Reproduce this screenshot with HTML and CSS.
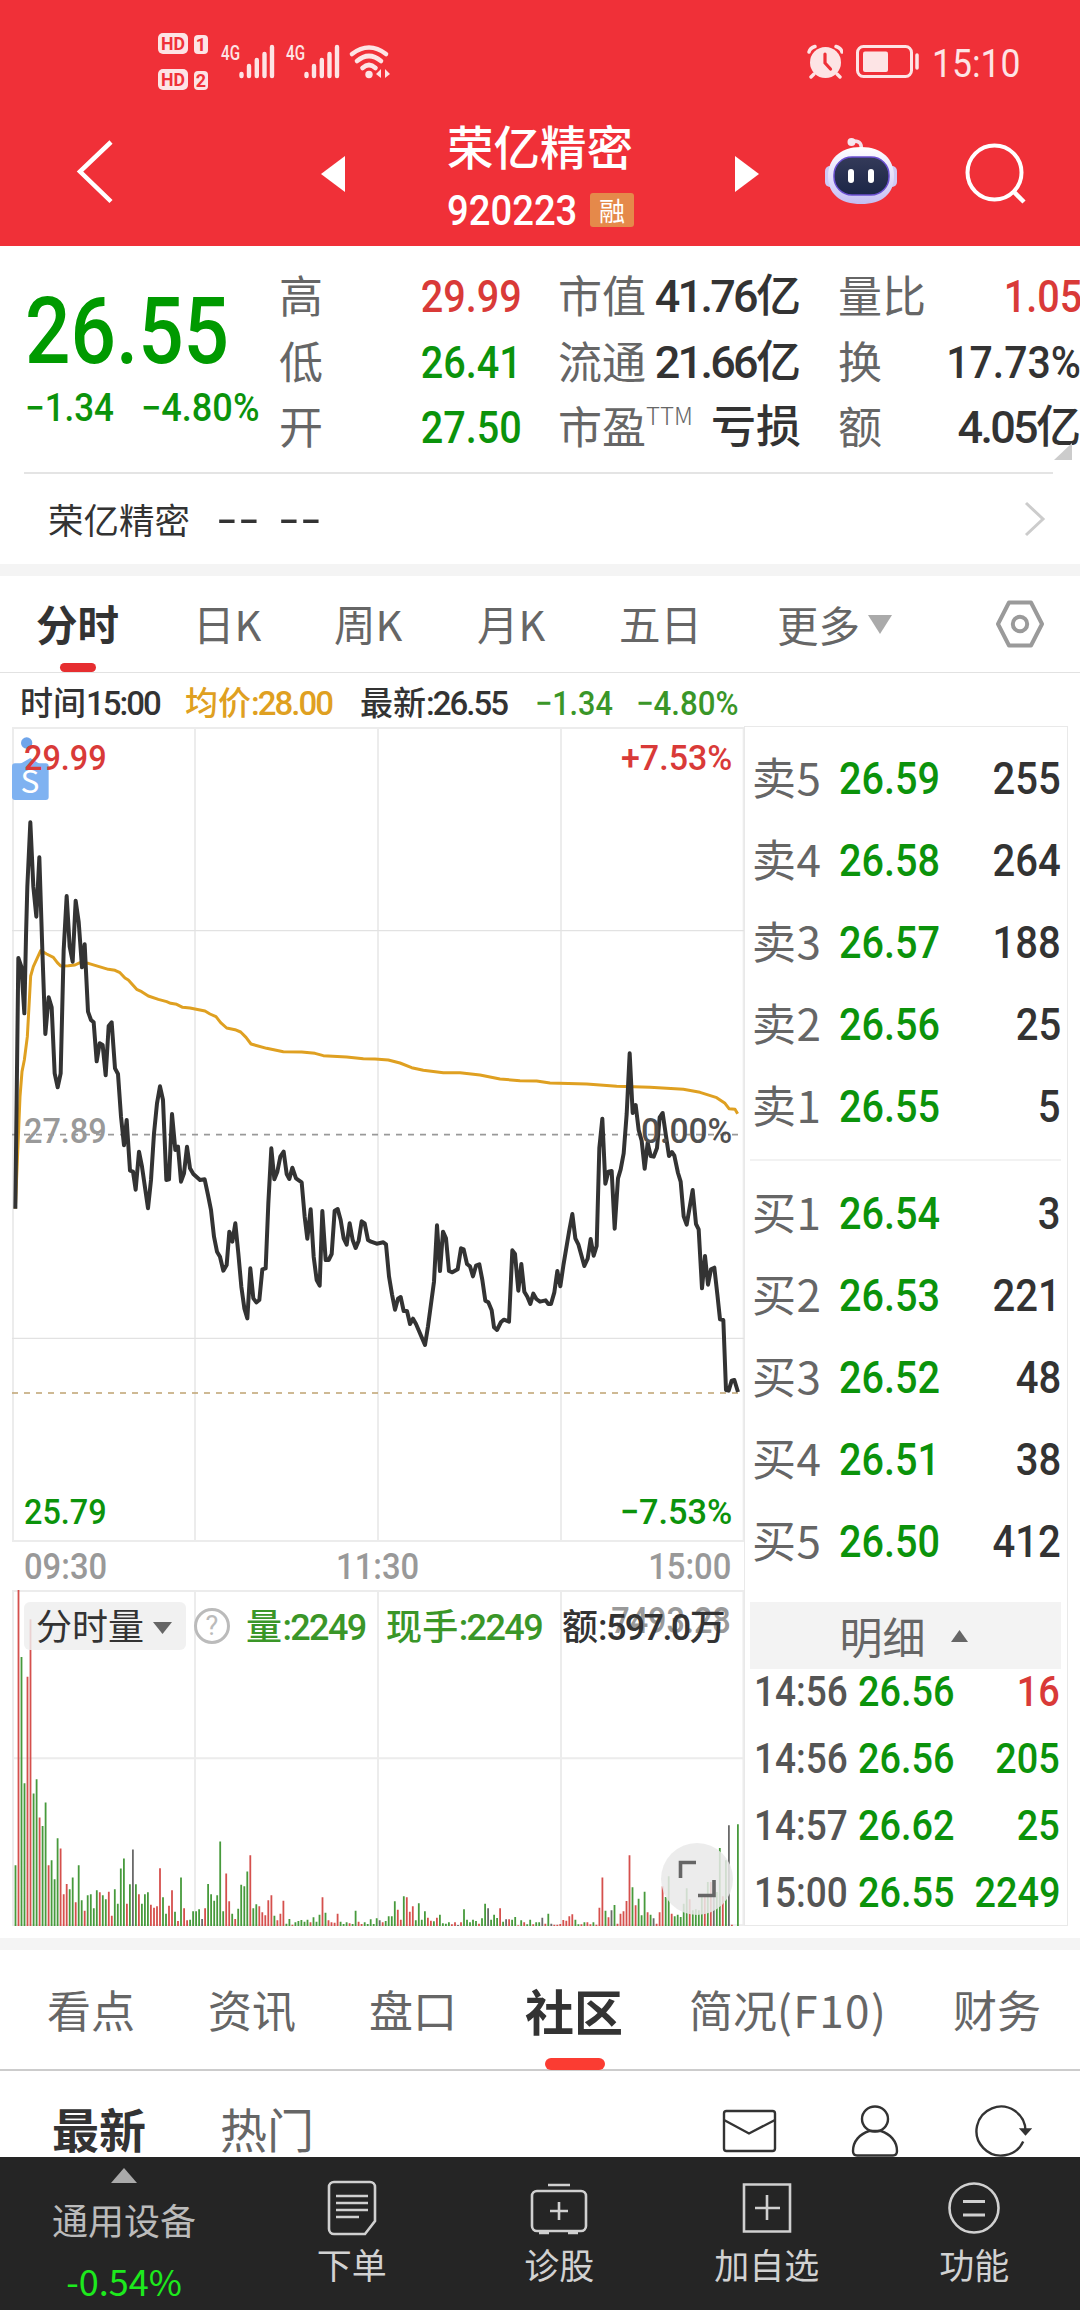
FILE: index.html
```html
<!DOCTYPE html>
<html lang="zh-CN">
<head>
<meta charset="utf-8">
<title>荣亿精密 920223</title>
<link rel="stylesheet" href="styles.css">
</head>
<body>
<div class="app">
  <header class="top">
    <div class="status">
      <svg class="status-left" width="240" height="66" viewBox="156 28 240 66">
        <g fill="#fde4e5">
          <rect x="158" y="33" width="30" height="21" rx="5"/><rect x="194" y="35" width="14" height="19" rx="4"/>
          <rect x="158" y="69" width="30" height="21" rx="5"/><rect x="194" y="71" width="14" height="19" rx="4"/>
        </g>
        <g class="hd">
          <text x="173" y="50" textLength="24" lengthAdjust="spacingAndGlyphs">HD</text><text x="201" y="51">1</text>
          <text x="173" y="86" textLength="24" lengthAdjust="spacingAndGlyphs">HD</text><text x="201" y="87">2</text>
        </g>
        <g class="net">
          <text x="221" y="60" textLength="19" lengthAdjust="spacingAndGlyphs">4G</text>
          <text x="286" y="60" textLength="19" lengthAdjust="spacingAndGlyphs">4G</text>
        </g>
        <g stroke="#fde4e5" stroke-width="4.4" stroke-linecap="round" fill="none">
          <path d="M241.500 74v2M249 66v10M256.800 60v16M264.500 54v22M272 47v29"/>
          <path d="M306.500 74v2M314 66v10M321.800 60v16M329.500 54v22M337 47v29"/>
          <path d="M352 54q17-13 34 0M357 61q12-10 24 0M362.500 68q6.500-6 13 0" stroke-width="4.600"/>
        </g>
        <circle cx="369" cy="74.500" r="3.700" fill="#fde4e5"/>
        <path d="M381 69v9l-5-4zM385 78v-9l5 5z" fill="#fde4e5"/>
      </svg>
      <div class="status-right">
        <svg width="36" height="36" viewBox="805 44 36 36">
          <circle cx="823.500" cy="62.500" r="15.500" fill="#fde4e5"/>
          <path d="M807 52q1-4 6-5.500M840 52q-1-4-6-5.500M812 74l-3 3M835 74l3 3" stroke="#fde4e5" stroke-width="3.400" fill="none" stroke-linecap="round"/>
          <path d="M823 54v9l5.500 6" stroke="#ef3038" stroke-width="3.200" fill="none" stroke-linecap="round"/>
        </svg>
        <svg width="64" height="36" viewBox="853 44 64 36">
          <rect x="855.500" y="46.500" width="54" height="30" rx="6" fill="none" stroke="#fde4e5" stroke-width="3"/>
          <rect x="861" y="51.500" width="25" height="20.500" rx="2" fill="#fde4e5"/>
          <path d="M915 55v13" stroke="#fde4e5" stroke-width="3.500" stroke-linecap="round"/>
        </svg>
        <span class="clock">15:10</span>
      </div>
    </div>
    <nav class="titlebar">
      <svg class="back" width="42" height="70" viewBox="74 136 42 70"><path d="M111 142L80 171.500l31 30" fill="none" stroke="#fff" stroke-width="4.500"/></svg>
      <svg class="prev" width="24" height="36" viewBox="0 0 24 36"><path d="M24 0v36L0 18z" fill="#fff"/></svg>
      <div class="title">
        <h1>荣亿精密</h1>
        <div class="code"><span class="num">920223</span><span class="badge">融</span></div>
      </div>
      <svg class="next" width="24" height="36" viewBox="0 0 24 36"><path d="M0 0v36l24-18z" fill="#fff"/></svg>
      <svg class="robot" width="74" height="70" viewBox="824 136 74 70">
        <defs>
          <linearGradient id="shell" x1="0" y1="0" x2="0" y2="1"><stop offset="0" stop-color="#fff"/><stop offset=".55" stop-color="#e2ddfb"/><stop offset="1" stop-color="#c3bdf2"/></linearGradient>
          <linearGradient id="visor" x1="0" y1="0" x2="0" y2="1"><stop offset="0" stop-color="#343a59"/><stop offset="1" stop-color="#1b2647"/></linearGradient>
        </defs>
        <path d="M861 151q2-10-7-10" fill="none" stroke="#f3dfe8" stroke-width="3.500"/>
        <circle cx="851.500" cy="142" r="4" fill="#f6e6ee"/>
        <rect x="825" y="166" width="10" height="21" rx="5" fill="#cfc9f5"/><rect x="887" y="166" width="10" height="21" rx="5" fill="#cfc9f5"/>
        <path d="M861 147c22 0 33 13 33 29 0 18-12 28-33 28s-33-10-33-28c0-16 11-29 33-29z" fill="url(#shell)"/>
        <rect x="834" y="157" width="55" height="38" rx="18" fill="url(#visor)" stroke="#6a4fd0" stroke-width="1.500"/>
        <rect x="848" y="169" width="6" height="14" rx="3" fill="#fff"/><rect x="868" y="169" width="6" height="14" rx="3" fill="#fff"/>
      </svg>
      <svg class="search" width="64" height="64" viewBox="964 142 64 64"><circle cx="994.500" cy="172.500" r="27" fill="none" stroke="#fff" stroke-width="4"/><path d="M1013 191l11 11" stroke="#fff" stroke-width="4.500"/></svg>
    </nav>
  </header>

  <section class="quote">
    <div class="price">
      <div class="last num">26.55</div>
      <div class="change num"><span>−1.34</span><span class="pct">−4.80%</span></div>
    </div>
    <dl class="stats">
      <div><dt>高</dt><dd class="up slim">29.99</dd></div>
      <div><dt>市值</dt><dd><span class="tight">41.76</span>亿</dd></div>
      <div><dt>量比</dt><dd class="up slim">1.05</dd></div>
      <div><dt>低</dt><dd class="down slim">26.41</dd></div>
      <div><dt>流通</dt><dd><span class="tight">21.66</span>亿</dd></div>
      <div><dt>换</dt><dd class="slim wide">17.73%</dd></div>
      <div><dt>开</dt><dd class="down slim">27.50</dd></div>
      <div><dt>市盈<sup>TTM</sup></dt><dd>亏损</dd></div>
      <div><dt>额</dt><dd><span class="tight">4.05</span>亿</dd></div>
    </dl>
    <svg class="corner" width="18" height="17" viewBox="0 0 18 17"><path d="M18 0v17H0z" fill="#ccc"/></svg>
  </section>

  <div class="related">
    <span class="rel-name">荣亿精密</span><span class="dash">--</span><span class="dash">--</span>
    <svg width="22" height="36" viewBox="0 0 22 36"><path d="M2 2l17 16L2 34" fill="none" stroke="#ccc" stroke-width="3"/></svg>
  </div>

  <nav class="periods">
    <span class="p1 on">分时</span><span class="p2">日K</span><span class="p3">周K</span><span class="p4">月K</span><span class="p5">五日</span>
    <span class="p6">更多<svg width="24" height="19" viewBox="0 0 24 19"><path d="M0 0h24L12 19z" fill="#aaa"/></svg></span>
    <svg class="gear" width="50" height="48" viewBox="0 0 50 48"><path d="M14 2.500h22L47 24 36 45.500H14L3 24z" fill="none" stroke="#9a9a9a" stroke-width="4" stroke-linejoin="round"/><circle cx="25" cy="24" r="7.200" fill="none" stroke="#9a9a9a" stroke-width="4"/></svg>
  </nav>

  <main class="board">
    <div class="charts">
      <div class="info num">
        <span class="i1">时间<span class="tight">15:00</span></span><span class="i2 avg">均价<span class="tight">:28.00</span></span><span class="i3">最新<span class="tight">:26.55</span></span><span class="i4 dn">−1.34</span><span class="i5 dn">−4.80%</span>
      </div>
      <svg class="minute" width="733" height="816" viewBox="36 21 2199 2448">
        <g class="grid">
          <path d="M39 21V2466M585 21V2466M1134 21V2466M1683 21V2466M2231 21V2466M36 24H2235M36 2463H2235"/>
          <path class="thin" d="M36 632H2232M36 1855H2232"/>
        </g>
        <path class="dash-base" d="M36 1244H2214"/>
        <path class="dash-last" d="M36 2019H2214"/>
        <circle cx="80" cy="69" r="17" fill="#6fa5ea"/>
        <path d="M60 132l31-18 28 18z" fill="#7db1f0"/>
        <rect x="36" y="130" width="110" height="110" rx="9" fill="#7fb2f1"/>
        <text class="flag" x="90" y="220">S</text>
        <polyline class="avg-line" points="46,1466 55,1250 60,1130 66,1055 73,1020 82,950 92,768 100,740 122,692 140,702 160,712 172,728 182,738 205,737 225,735 240,728 265,730 325,748 345,751 360,758 375,774 385,780 410,808 425,815 445,828 475,838 500,845 512,850 530,853 548,862 570,864 615,873 630,882 648,890 662,908 680,924 705,929 722,936 738,952 753,972 800,985 850,995 905,996 945,1000 970,1007 1040,1011 1090,1016 1125,1017 1165,1020 1200,1029 1235,1043 1270,1051 1330,1058 1380,1058 1440,1065 1500,1077 1560,1082 1610,1083 1650,1089 1760,1092 1850,1099 1950,1102 2000,1105 2050,1108 2100,1117 2150,1133 2175,1150 2187,1166 2205,1168 2213,1181"/>
        <polyline class="price-line" points="46,1466 55,714 64,740 73,880 78,650 82,500 91,307 100,500 109,590 118,412 127,690 136,942 146,832 155,862 164,1060 173,1102 182,1060 191,690 200,528 209,680 218,725 227,542 236,605 246,742 254,673 264,875 273,900 281,907 290,1024 299,970 308,975 317,1066 326,918 335,907 345,1045 354,1062 363,1190 372,1276 380,1200 390,1352 399,1355 407,1409 417,1295 426,1340 444,1465 453,1380 462,1240 471,1150 480,1099 489,1140 499,1380 507,1378 516,1182 526,1290 534,1280 543,1385 552,1360 561,1280 570,1345 580,1362 600,1380 614,1378 624,1425 633,1470 642,1550 651,1595 660,1610 670,1652 680,1635 688,1535 697,1565 706,1510 715,1600 724,1700 733,1765 742,1795 751,1645 760,1735 769,1747 778,1740 787,1648 797,1645 805,1450 814,1285 823,1378 832,1355 841,1310 851,1295 860,1362 868,1377 877,1343 888,1375 905,1387 914,1490 922,1556 932,1468 941,1610 950,1680 959,1697 967,1473 977,1620 986,1620 995,1602 1004,1472 1013,1467 1022,1500 1031,1555 1040,1574 1049,1510 1058,1560 1067,1584 1076,1562 1085,1504 1094,1510 1104,1560 1113,1565 1130,1571 1150,1567 1158,1573 1167,1669 1176,1723 1185,1769 1194,1736 1202,1731 1211,1773 1221,1773 1230,1812 1239,1796 1248,1812 1275,1875 1284,1819 1302,1685 1311,1516 1320,1653 1329,1535 1338,1555 1347,1653 1357,1657 1373,1648 1383,1585 1391,1588 1401,1632 1410,1639 1419,1669 1428,1637 1438,1633 1447,1680 1456,1742 1465,1747 1475,1771 1482,1822 1491,1830 1503,1806 1512,1799 1527,1805 1537,1591 1545,1602 1555,1712 1564,1632 1573,1715 1582,1730 1591,1752 1600,1721 1609,1737 1620,1745 1637,1741 1645,1752 1653,1752 1663,1717 1672,1653 1681,1699 1690,1637 1708,1530 1717,1482 1726,1555 1735,1573 1753,1638 1763,1616 1772,1557 1781,1607 1790,1578 1798,1284 1807,1196 1816,1391 1825,1355 1835,1353 1844,1526 1854,1375 1862,1348 1871,1300 1880,1182 1889,1000 1898,1179 1907,1155 1916,1230 1925,1262 1934,1346 1943,1268 1952,1308 1961,1310 1971,1284 1979,1192 1988,1179 1997,1241 2007,1308 2016,1296 2023,1307 2034,1359 2042,1385 2051,1489 2060,1514 2078,1410 2088,1512 2096,1528 2106,1705 2115,1608 2124,1694 2133,1648 2143,1643 2152,1723 2160,1798 2170,1800 2178,2010 2186,2012 2195,1982 2203,1980 2214,2016"/>
        <g class="axis">
          <text x="72" y="149" class="fill-up" textLength="248" lengthAdjust="spacingAndGlyphs">29.99</text>
          <text x="2197" y="149" class="fill-up end" textLength="334" lengthAdjust="spacingAndGlyphs">+7.53%</text>
          <text x="72" y="1269" class="fill-mid" textLength="248" lengthAdjust="spacingAndGlyphs">27.89</text>
          <text x="2197" y="1269" class="fill-dark end" textLength="274" lengthAdjust="spacingAndGlyphs">0.00%</text>
          <text x="72" y="2411" class="fill-down" textLength="248" lengthAdjust="spacingAndGlyphs">25.79</text>
          <text x="2197" y="2411" class="fill-down end" textLength="338" lengthAdjust="spacingAndGlyphs">−7.53%</text>
        </g>
      </svg>
      <div class="times num"><span>09:30</span><span>11:30</span><span>15:00</span></div>
      <div class="volume">
        <svg class="vol-chart" width="733" height="336" viewBox="12 30 733 1007" preserveAspectRatio="none">
          <path class="vgrid" d="M13 30V1037M195 30V1037M378 30V1037M561 30V1037M743.500 30V1037"/>
          <path class="hgrid" d="M12 33H745M12 534H745M12 1035H745"/>
          <path id="vol-up" class="bars" stroke="#d5504d"/><path id="vol-down" class="bars" stroke="#479a3c"/><path id="vol-flat" class="bars" stroke="#6a6a6a"/>
        </svg>
        <div class="vol-head num">
          <span class="picker">分时量<svg width="19" height="12" viewBox="0 0 19 12"><path d="M0 0h19L9.500 12z" fill="#666"/></svg></span>
          <span class="help">?</span>
          <span class="v1 dn">量<span class="tight">:2249</span></span><span class="v2 dn">现手<span class="tight">:2249</span></span><span class="v3">额<span class="tight">:597.0</span>万</span>
        </div>
        <span class="vol-max num">7493.28</span>
        <svg class="expand" width="72" height="72" viewBox="0 0 72 72"><circle cx="36" cy="36" r="36" fill="#e9e9e9" fill-opacity=".85"/><path d="M35 19.500H19.500V35M37 52.500h16V37" fill="none" stroke="#666" stroke-width="3.600"/></svg>
      </div>
    </div>

    <aside class="book">
      <div class="levels sell">
        <div><b>卖5</b><i>26.59</i><em>255</em></div>
        <div><b>卖4</b><i>26.58</i><em>264</em></div>
        <div><b>卖3</b><i>26.57</i><em>188</em></div>
        <div><b>卖2</b><i>26.56</i><em>25</em></div>
        <div><b>卖1</b><i>26.55</i><em>5</em></div>
      </div>
      <div class="levels buy">
        <div><b>买1</b><i>26.54</i><em>3</em></div>
        <div><b>买2</b><i>26.53</i><em>221</em></div>
        <div><b>买3</b><i>26.52</i><em>48</em></div>
        <div><b>买4</b><i>26.51</i><em>38</em></div>
        <div><b>买5</b><i>26.50</i><em>412</em></div>
      </div>
      <div class="detail-head">明细<svg width="17" height="12" viewBox="0 0 17 12"><path d="M0 12h17L8.500 0z" fill="#666"/></svg></div>
      <div class="ticks num">
        <div><b>14:56</b><i>26.56</i><em class="up">16</em></div>
        <div><b>14:56</b><i>26.56</i><em>205</em></div>
        <div><b>14:57</b><i>26.62</i><em>25</em></div>
        <div><b>15:00</b><i>26.55</i><em>2249</em></div>
      </div>
    </aside>
  </main>

  <nav class="sections">
    <span class="s1">看点</span><span class="s2">资讯</span><span class="s3">盘口</span><span class="s4 on">社区</span><span class="s5">简况<span class="code-tag">(F10)</span></span><span class="s6">财务</span>
  </nav>

  <div class="feed">
    <span class="f1">最新</span><span class="f2">热门</span>
    <svg width="310" height="54" viewBox="722 2104 310 54" fill="none" stroke="#333" stroke-width="2.400">
      <rect x="724" y="2111" width="51" height="40" rx="2.500"/><path d="M724 2120l25 13.500 26-13.500"/>
      <ellipse cx="875" cy="2119" rx="13" ry="12.500"/><path d="M869 2131c-9 3-16 10-16 20q0 4.500 4 4.500h36q4 0 4-4.500c0-10-7-17-16-20z"/>
      <path d="M1023.200 2141.400A24.500 24.500 0 1 1 1025.500 2131"/><path d="M1021.500 2129.500h8l-4 4.500z" fill="#333"/>
    </svg>
  </div>

  <footer class="dock">
    <div class="index">
      <svg width="26" height="15" viewBox="0 0 26 15"><path d="M0 15h26L13 0z" fill="#aaa"/></svg>
      <span class="idx-name">通用设备</span><span class="idx-chg">-0.54%</span>
    </div>
    <div class="act a1">
      <svg width="60" height="60" viewBox="0 0 60 60"><path d="M12 4h36a5 5 0 0 1 5 5v34L43 56H12a5 5 0 0 1-5-5V9a5 5 0 0 1 5-5z"/><path d="M14 18h32M14 25h32M14 32h32M14 39h23"/></svg>
      <span>下单</span>
    </div>
    <div class="act a2">
      <svg width="60" height="60" viewBox="0 0 60 60"><rect x="3" y="13" width="54" height="40" rx="5"/><path d="M19 7h22M30 24v18M21 33h18M10 55h10M39 55h10"/></svg>
      <span>诊股</span>
    </div>
    <div class="act a3">
      <svg width="60" height="60" viewBox="0 0 60 60"><path d="M7 6.500h46v47H7zM30 17v25M18 30h25"/></svg>
      <span>加自选</span>
    </div>
    <div class="act a4">
      <svg width="60" height="60" viewBox="0 0 60 60"><circle cx="30" cy="30" r="24.500"/><path d="M19 23.500h22M19 37h22" stroke-width="3"/></svg>
      <span>功能</span>
    </div>
  </footer>
</div>
<script src="volume.js"></script>
</body>
</html>
```
FILE: styles.css
```css
* { box-sizing: border-box; margin: 0; padding: 0; }
body {
  width: 1080px;
  background: #fff;
  color: #333;
  font-family: "Noto Sans CJK SC", "Noto Sans", sans-serif;
  line-height: 1;
  white-space: nowrap;
}
svg { display: block; flex: none; }
i, em { font-style: normal; }
b { font-weight: 400; }
.app { width: 1080px; height: 2310px; overflow: hidden; display: flex; flex-direction: column; }
.app > * { flex: none; }
.num, .stats dd, .levels i, .levels em, .axis, .clock, .net, .hd {
  font-family: Roboto, "Noto Sans CJK SC", sans-serif;
  font-weight: 500;
}
.tight { letter-spacing: -.06em; }
.up { color: #d93a38; }
.down { color: #0b930b; }
.dn { color: #3a9628; }

/* header */
.top { height: 246px; background: #f03038; color: #fff; }
.status { height: 120px; display: flex; justify-content: space-between; padding: 28px 61px 0 156px; }
.hd { font-size: 18px; font-weight: 700; fill: #ef3038; text-anchor: middle; }
.net { font-size: 20px; fill: #fde4e5; }
.status-right { display: flex; align-items: center; height: 68px; color: #fde4e5; }
.status-right svg + svg { margin-left: 12px; }
.clock { font-size: 39px; font-weight: 400; width: 87px; margin-left: 13px; padding-top: 5px; transform: scaleX(.91); transform-origin: left; }
.titlebar { height: 126px; display: flex; align-items: flex-start; padding-left: 74px; }
.back { margin-top: 16px; }
.prev { margin: 36px 0 0 205px; }
.title { width: 187px; margin-left: 102px; }
h1 { font-size: 46.500px; font-weight: 500; line-height: 50px; }
.code { display: flex; align-items: center; height: 34px; margin-top: 23px; font-size: 42px; }
.code .num { flex: none; width: 143px; padding-top: 1px; transform: scaleX(.91); transform-origin: left; }
.badge { flex: none; width: 44px; height: 34px; border-radius: 3px; background: #e5894a; font-size: 26px; line-height: 33px; text-align: center; }
.next { margin: 36px 0 0 101px; }
.robot { margin: 16px 0 0 65px; }
.search { margin: 22px 0 0 66px; }

/* quote summary */
.quote { position: relative; width: 1080px; height: 228px; display: flex; }
.quote::after { content: ""; position: absolute; left: 24px; right: 27px; bottom: 0; border-bottom: 2px solid #e4e4e4; }
.price { width: 280px; padding: 40px 0 0 25px; color: #0b930b; }
.last { font-size: 93px; line-height: 92px; color: #009a00; transform: scaleX(.86); transform-origin: left; }
.change { display: flex; margin-top: 12px; font-size: 38px; line-height: 36px; }
.change span { flex: none; width: 116px; transform: scaleX(.92); transform-origin: left; }
.change .pct { transform: scaleX(.95); }
.stats { display: grid; grid-template-columns: 241px 242px 242px; column-gap: 38px; grid-auto-rows: 65.5px; padding-top: 18px; width: 800px; }
.stats > div { display: flex; justify-content: space-between; align-items: center; }
dt { font-size: 44px; color: #666; display: flex; margin: -5px 0 0 -1px; }
dt sup { font-size: 24px; line-height: 24px; font-weight: 300; }
dd { font-size: 45px; }
.slim { transform: translateX(1px) scaleX(.88); transform-origin: right; }
.slim.wide { transform: scaleX(.91); }
.corner { position: absolute; left: 1054px; top: 197px; }
.related { height: 90px; display: flex; align-items: center; padding: 0 34px 0 48px; font-size: 35.5px; }
.rel-name { width: 170px; }
.dash { width: 62px; font-family: Roboto, sans-serif; font-size: 46px; letter-spacing: 3px; transform: scaleX(1.4); transform-origin: left; }
.related svg { margin-left: auto; }

/* period tabs */
.periods { height: 109px; display: flex; align-items: flex-start; border-top: 12px solid #f4f4f4; border-bottom: 1px solid #e2e2e2; color: #666; font-size: 41.5px; line-height: 95px; padding-left: 36px; }
.periods span { flex: none; height: 96px; }
.p1 { width: 157px; } .p2 { width: 141px; } .p3 { width: 143px; } .p4 { width: 142px; } .p5 { width: 158px; }
.p6 { width: 218px; display: flex; align-items: center; gap: 8px; }
.periods .on { position: relative; color: #333; font-weight: 700; }
.periods .on::after { content: ""; position: absolute; left: 24px; bottom: 0; width: 36px; height: 9px; border-radius: 5px; background: #e62e30; }
.gear { margin-top: 24px; }

/* charts */
.board { height: 1265px; display: flex; }
.charts { width: 744px; flex: none; }
.info { height: 54px; display: flex; align-items: center; padding: 6px 0 0 20px; font-size: 33px; }
.info > span { flex: none; }
.i1 { width: 165px; } .i2 { width: 175px; } .i3 { width: 175px; }
.i4 { width: 101px; }
.i4, .i5 { font-size: 34px; transform: scaleX(.9); transform-origin: left; }
.info .i5 { transform: scaleX(.92); }
.avg { color: #dfa021; }
.minute { margin-left: 12px; }
.grid path { fill: none; stroke: #ececec; stroke-width: 6; }
.grid .thin { stroke: #e2e2e2; stroke-width: 3.500; }
.dash-base { fill: none; stroke: #999; stroke-width: 5; stroke-dasharray: 18 18; }
.dash-last { fill: none; stroke: #bfa372; stroke-width: 5; stroke-dasharray: 18 18; }
.avg-line, .price-line { fill: none; stroke: #dfa021; stroke-width: 9; stroke-linejoin: round; }
.price-line { stroke: #333; stroke-width: 12; }
.flag { font: 95px "Noto Sans CJK SC", sans-serif; fill: #fff; text-anchor: middle; }
.axis { font-size: 107px; }
.end { text-anchor: end; }
.fill-up { fill: #d93a38; } .fill-down { fill: #0b930b; } .fill-mid { fill: #999; } .fill-dark { fill: #505050; }
.times { height: 47px; display: flex; justify-content: space-between; align-items: center; padding: 1px 13px 0 24px; font-size: 36px; color: #999; }
.times span { transform: scaleX(.91); }
.times span:first-child { transform-origin: left; }
.times span:last-child { transform-origin: right; }
.volume { position: relative; width: 733px; height: 336px; margin-left: 12px; }
.vol-chart { position: absolute; left: 0; top: 0; }
.vgrid, .hgrid { fill: none; stroke: #ececec; stroke-width: 2; vector-effect: non-scaling-stroke; }
.bars { fill: none; stroke-width: 1.800; vector-effect: non-scaling-stroke; }
.vol-head { position: absolute; left: 12px; top: 12px; height: 48px; display: flex; align-items: center; font-size: 36px; }
.picker { width: 162px; height: 48px; display: flex; align-items: center; gap: 9px; padding: 3px 0 0 12px; border-radius: 6px; background: rgba(238,238,238,.82); font-weight: 400; }
.help { width: 36px; height: 36px; margin-left: 8px; border: 3px solid #bbb; border-radius: 50%; color: #bbb; font-size: 27px; line-height: 31px; text-align: center; font-weight: 400; }
.v1, .v2, .v3 { padding-top: 3px; }
.v1, .v2 { letter-spacing: .01em; }
.vol-head .tight { letter-spacing: -.045em; }
.v1 { width: 140px; margin-left: 16px; } .v2 { width: 176px; }
.vol-max { position: absolute; right: 14px; top: 13px; font-size: 36px; color: #999; z-index: -1; transform: scaleX(.9); transform-origin: right; }
.expand { position: absolute; left: 649px; top: 253px; }

/* order book */
.book { position: relative; width: 324px; height: 1200px; margin-top: 53px; padding: 10px 6px 0 5px; border: 1px solid #e9e9e9; }
.levels > div, .ticks > div { display: grid; grid-template-columns: 87px 1fr auto; align-items: center; height: 82px; padding: 0 0 0 2px; }
.levels b { font-size: 44px; color: #666; margin-top: -4px; letter-spacing: .5px; }
.levels i, .levels em { font-size: 45px; }
.levels i, .ticks i, .ticks b { transform: scaleX(.88); transform-origin: left; }
.levels em, .ticks em { transform: scaleX(.89); transform-origin: right; }
.levels i { color: #0b930b; }
.sell { height: 424px; border-bottom: 2px solid #f2f2f2; }
.buy { padding-top: 11px; height: 441px; }
.detail-head { height: 67px; display: flex; align-items: center; justify-content: center; gap: 25px; background: #f3f3f3; color: #666; font-size: 43px; padding: 0 4px 0 0; }
.ticks > div { height: 67px; grid-template-columns: 104px 1fr auto; font-size: 42px; padding: 0 1px 0 4px; color: #0b930b; }
.ticks { margin-top: -11px; }
.ticks i, .ticks em { transform: scaleX(.9); }
.ticks b { color: #555; font-weight: 500; }
.ticks .up { color: #d93a38; }

/* community */
.sections { height: 133px; border-top: 12px solid #f4f4f4; border-bottom: 2px solid #ccc; display: flex; font-size: 44px; line-height: 119px; color: #666; padding-left: 47px; }
.sections > span { flex: none; }
.s1 { width: 161px; } .s2 { width: 161px; } .s3 { width: 156px; } .s4 { width: 164px; } .s5 { width: 264px; }
.code-tag { letter-spacing: 1.500px; }
.sections .on { position: relative; color: #333; font-size: 49px; font-weight: 700; }
.sections .on::after { content: ""; position: absolute; left: 20px; bottom: -1px; width: 60px; height: 12px; border-radius: 6px; background: #fb3c32; }
.feed { height: 86px; display: flex; font-size: 47px; line-height: 114px; padding-left: 52px; overflow: hidden; }
.f1 { width: 168px; font-weight: 700; }
.f2 { width: 502px; color: #666; }
.feed svg { margin-top: 33px; }

/* dock */
.dock { height: 153px; background: #252525; color: #d2d2d2; display: flex; font-size: 35px; }
.index { width: 248px; display: flex; flex-direction: column; align-items: center; padding-top: 11px; }
.idx-name { margin-top: 18px; font-size: 36px; color: #bbb; }
.idx-chg { margin-top: 25px; font-size: 36px; color: #1dea1d; }
.act { width: 207.500px; display: flex; flex-direction: column; align-items: center; padding-top: 21px; }
.act svg { fill: none; stroke: #d0d0d0; stroke-width: 2.600; }
.act span { margin-top: 8px; }
```
FILE: volume.js
```js
// Bar tops per minute (30 = full height, 1037 = baseline) with r up, g down, k unchanged.
const tops = `855g 30r 231g 609g 290r 118r 640g 597g 712r 737g 667g 855r 840g 897g 774g 805r 942r 911r 927g 892g
966r 855g 960g 991r 945g 942g 984g 930g 936r 945g 957g 934r 1006r 927g 970g 865g 835g 970r 912g 808k
912g 942r 970g 942g 936g 973r 982r 978r 864r 951g 1000g 976r 930r 994g 1022r 892g 984r 1020r 1018g 993g
993g 987g 1016k 984r 911g 942g 961g 945g 784g 993g 880r 963r 1000g 1016r 985g 913g 918g 874g 825r 984g
972g 978r 996r 1005r 960r 945r 1006g 1020r 1000r 961r 1030g 1016g 1033r 1026g 1022g 1019g 1024g 1018g 1026r 1011g
1024g 1003g 951r 997g 1020r 1026r 1027r 1000r 1024g 1031g 1026g 1029r 1031g 991g 1024r 1031r 1026g 1031g 1017g 1031g
1014g 1020k 1026r 1022g 1008g 1008g 963g 988r 1018r 948g 951r 994r 978r 1020g 969g 1018g 993g 1012r 1021r 1023g
1012r 1003g 1029g 1030g 1026g 1032r 1026r 1034k 1026r 987g 1018g 1026g 1018g 1022g 1030r 1014g 970g 984k 1018g 1003g
1013g 984r 1024g 1017k 1017r 1018g 1010g 1035r 1020g 1026r 1032g 1018g 1032r 1026g 1026g 1012k 1030r 1000g 1030k 1033r
1033r 1031r 1019r 1021r 1008r 1002r 1018g 1032g 1032r 1026g 1026r 1032r 1026g 1033r 982r 892r 991g 1011r 990k 974g
1030r 1000r 993r 962r 825r 921g 975r 955g 1005g 934g 996r 1003g 1014k 1030r 996r 918r 950g 888g 1000r 1008g
1003g 1010g 970g 924g 957r 990g 987g 990g 950g 945r 905g 905r 900k 935g 803g 948r 840g 735k 1033r 1037k 732g`.split(/\s+/);

const paths = { r: "", g: "", k: "" };
tops.forEach((bar, i) => {
  paths[bar.slice(-1)] += `M${(15.5 + i * 3.01).toFixed(1)} ${parseInt(bar, 10)}V1037`;
});
document.getElementById("vol-up").setAttribute("d", paths.r);
document.getElementById("vol-down").setAttribute("d", paths.g);
document.getElementById("vol-flat").setAttribute("d", paths.k);
```
